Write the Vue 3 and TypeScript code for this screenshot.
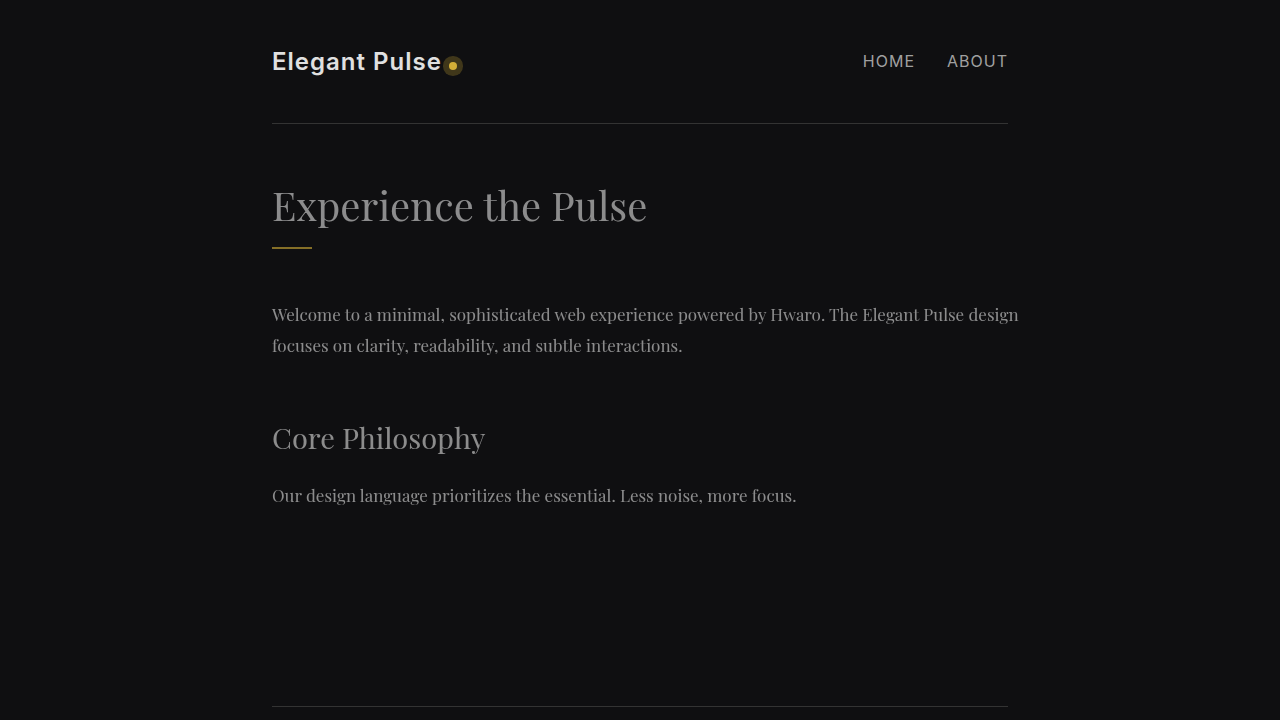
<script setup lang="ts">
interface NavLink {
  label: string
  href: string
}

const links: NavLink[] = [
  { label: 'Home', href: '#home' },
  { label: 'About', href: '#about' },
]
</script>

<template>
  <div class="page">
    <header class="site-header">
      <a class="logo" href="#home">Elegant Pulse<span class="pulse" aria-hidden="true"></span></a>
      <nav class="nav" aria-label="Main">
        <a v-for="link in links" :key="link.href" :href="link.href">{{ link.label }}</a>
      </nav>
    </header>
    <main class="content">
      <h1>Experience the Pulse</h1>
      <p>
        Welcome to a minimal, sophisticated web experience powered by Hwaro. The Elegant Pulse design
        focuses on clarity, readability, and subtle interactions.
      </p>
      <h2>Core Philosophy</h2>
      <p>Our design language prioritizes the essential. Less noise, more focus.</p>
    </main>
    <footer class="site-footer"></footer>
  </div>
</template>

<style>
html {
  background: #0f0f11;
}
body {
  margin: 0;
}
</style>

<style scoped>
.page {
  box-sizing: border-box;
  display: flex;
  flex-direction: column;
  max-width: 800px;
  min-height: 100vh;
  margin: 0 auto;
  padding: 0 32px;
  color: #e0e0e0;
  font-family: "Playfair Display", "Liberation Serif", serif;
}
.site-header {
  display: flex;
  align-items: center;
  justify-content: space-between;
  padding: 40px 0;
  border-bottom: 1px solid #333333;
  font-family: Inter, "Liberation Sans", sans-serif;
}
.logo {
  display: flex;
  align-items: center;
  color: #e0e0e0;
  font-size: 24px;
  font-weight: 600;
  line-height: 43px;
  letter-spacing: 1px;
  text-decoration: none;
}
.pulse {
  width: 8px;
  height: 8px;
  margin: 8px 0 0 7px;
  border-radius: 50%;
  background: #d4af37;
  box-shadow: 0 0 0 6px rgba(212, 175, 55, 0.25);
}
.nav {
  display: flex;
  gap: 32px;
}
.nav a {
  color: #a0a0a0;
  font-size: 16px;
  line-height: 27px;
  letter-spacing: 1px;
  text-decoration: none;
  text-transform: uppercase;
}
.content {
  flex: 1;
  padding: 55px 0 64px;
  opacity: 0.6;
  will-change: opacity;
}
h1 {
  margin: 0 0 50px;
  font-size: 40px;
  font-weight: 400;
  line-height: 52px;
}
h1::after {
  content: "";
  display: block;
  width: 40px;
  height: 2px;
  margin-top: 16px;
  background: #d4af37;
}
h2 {
  margin: 56px 0 22px;
  font-size: 29px;
  font-weight: 400;
  line-height: 41px;
}
p {
  margin: 0 -16px 0 0;
  font-size: 17px;
  line-height: 31px;
}
.site-footer {
  min-height: 13px;
  border-top: 1px solid #333333;
}
</style>
